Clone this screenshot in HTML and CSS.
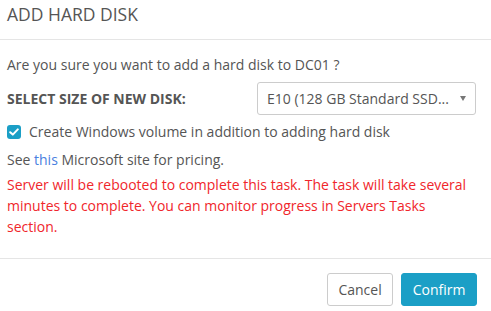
FILE: index.html
```html
<!DOCTYPE html>
<html>
<head>
<meta charset="utf-8">
<link rel="stylesheet" href="styles.css">
</head>
<body>
<div class="modal">
  <div class="modal-header">
    <h4 class="title">ADD HARD DISK</h4>
  </div>
  <div class="modal-body">
    <p class="question">Are you sure you want to add a hard disk to DC01 ?</p>
    <div class="size-row">
      <label class="size-label">SELECT SIZE OF NEW DISK:</label>
      <div class="select">
        <span class="select-text">E10 (128 GB Standard SSD...</span>
        <span class="caret"></span>
      </div>
    </div>
    <label class="check-row">
      <span class="checkbox">
        <svg width="10" height="8" viewBox="0 0 10 8"><path d="M1.2 4.2 L3.8 6.6 L8.8 1.4" fill="none" stroke="#fff" stroke-width="2" stroke-linecap="round" stroke-linejoin="round"/></svg>
      </span>
      <span>Create Windows volume in addition to adding hard disk</span>
    </label>
    <p class="pricing">See <a class="link">this</a> Microsoft site for pricing.</p>
    <p class="warning">Server will be rebooted to complete this task. The task will take several minutes to complete. You can monitor progress in Servers Tasks section.</p>
  </div>
  <div class="modal-footer">
    <button class="btn btn-default">Cancel</button>
    <button class="btn btn-primary">Confirm</button>
  </div>
</div>
</body>
</html>
```
FILE: styles.css
```css
html, body {
  margin: 0;
  padding: 0;
  background: #fff;
}
body {
  font-family: "Open Sans", "Noto Sans", sans-serif;
  font-size: 14px;
  color: #555;
  width: 491px;
}
.modal-header {
  height: 40px;
  box-sizing: border-box;
  border-bottom: 1px solid #e5e5e5;
  padding: 0 7px;
}
.title {
  margin: 0;
  font-size: 17.5px;
  font-weight: 400;
  line-height: 28px;
  color: #555;
}
.modal-body {
  padding: 15px 15px 21px 7px;
}
.question {
  margin: 0;
  line-height: 20px;
}
.size-row {
  display: flex;
  align-items: center;
  justify-content: space-between;
  margin-top: 7px;
}
.size-label {
  font-weight: 700;
  font-size: 14px;
}
.select {
  width: 219px;
  height: 33px;
  box-sizing: border-box;
  border: 1px solid #ccc;
  border-radius: 3px;
  display: flex;
  align-items: center;
  justify-content: space-between;
  padding: 0 9px 0 9px;
}
.caret {
  width: 0;
  height: 0;
  border-left: 3.5px solid transparent;
  border-right: 3.5px solid transparent;
  border-top: 5px solid #777;
}
.check-row {
  display: flex;
  align-items: center;
  gap: 8px;
  margin-top: 7px;
  line-height: 20px;
}
.checkbox {
  width: 14px;
  height: 14px;
  border-radius: 3px;
  background: #1b9fc6;
  display: flex;
  align-items: center;
  justify-content: center;
}
.pricing {
  margin: 8px 0 0 0;
  line-height: 20px;
}
.link {
  color: #4a80e0;
}
.warning {
  margin: 4px 0 0 0;
  line-height: 21px;
  color: #f0262b;
}
.modal-footer {
  border-top: 1px solid #e5e5e5;
  display: flex;
  justify-content: flex-end;
  gap: 8px;
  padding: 14px 14px 0 0;
}
.btn {
  font-family: "Open Sans", "Noto Sans", sans-serif;
  font-size: 14px;
  height: 33px;
  border-radius: 3px;
  padding: 0 10.5px;
  cursor: pointer;
}
.btn-default {
  background: #fff;
  border: 1px solid #ccc;
  color: #555;
}
.btn-primary {
  background: #1b9fc6;
  border: 1px solid #1b9fc6;
  color: #fff;
}
```
